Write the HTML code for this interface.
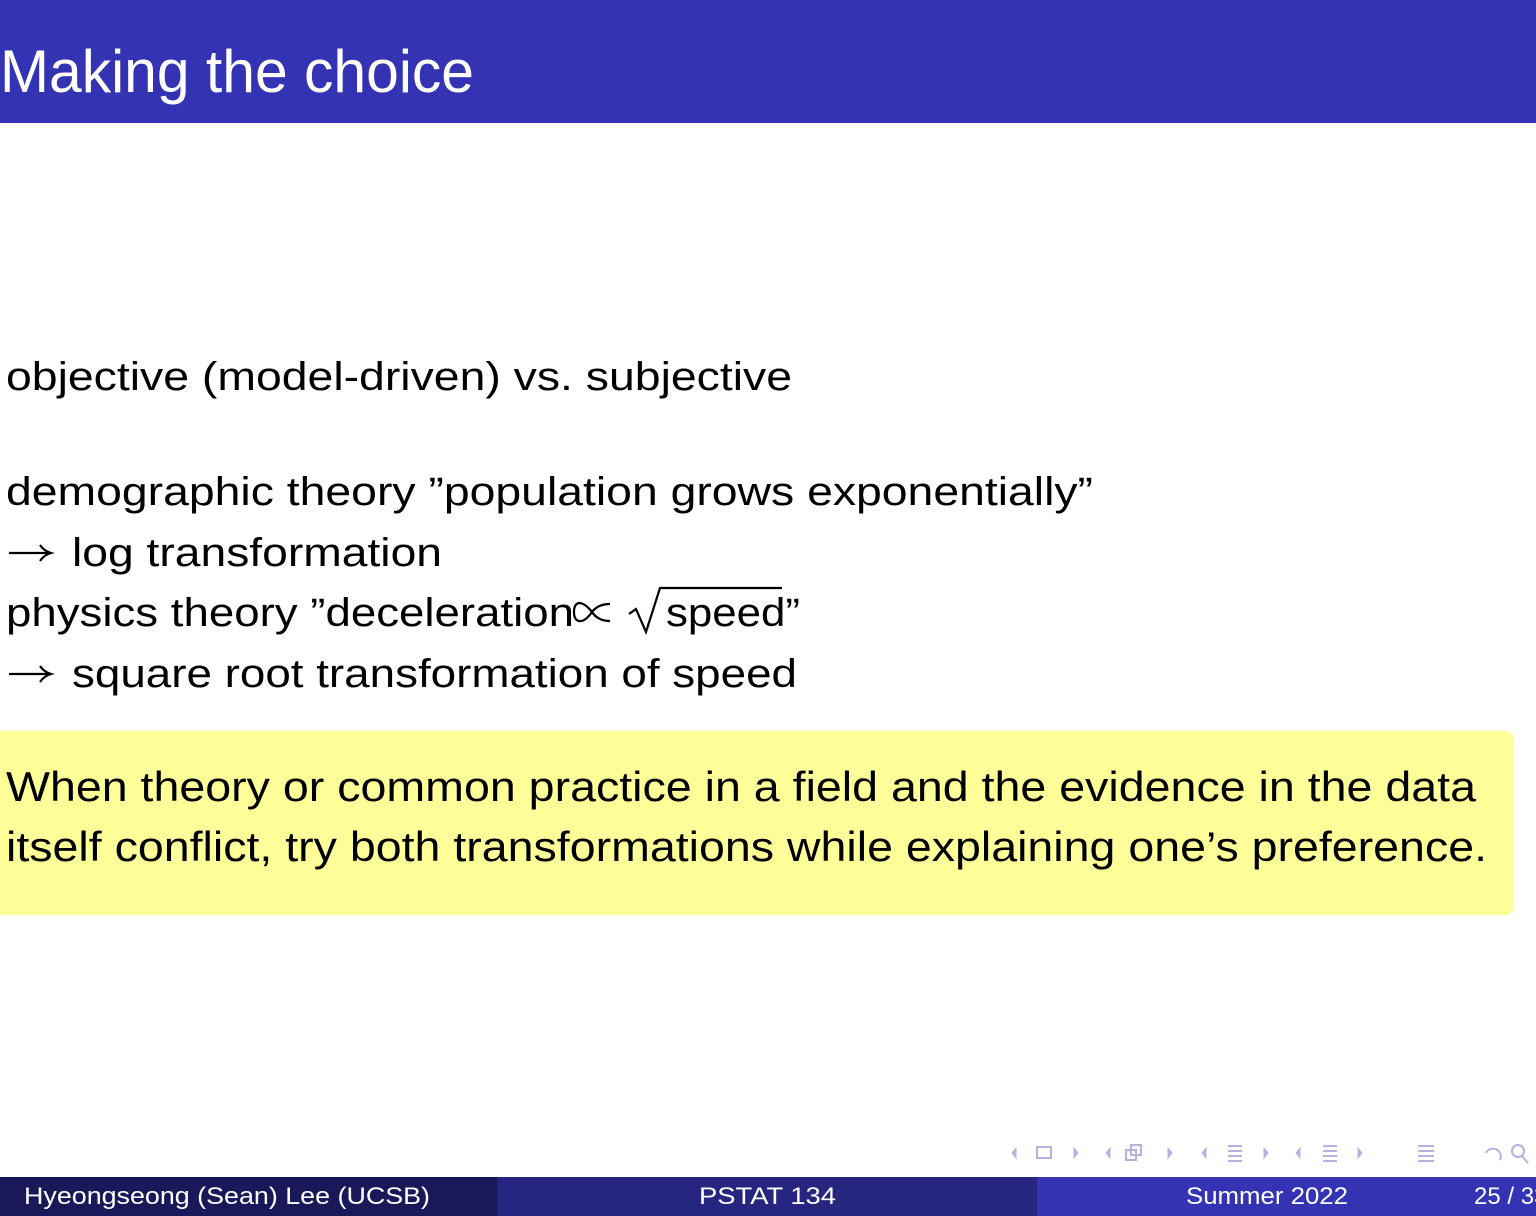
<!DOCTYPE html>
<html><head><meta charset="utf-8"><style>
html,body{margin:0;padding:0;width:1536px;height:1216px;overflow:hidden;background:#fff}
svg{display:block}
text{font-family:"Liberation Sans","DejaVu Sans",sans-serif}
</style></head><body>
<svg width="1536" height="1216" viewBox="0 0 1536 1216" xmlns="http://www.w3.org/2000/svg">
<rect x="0" y="0" width="1536" height="123" fill="#3333b3"/>
<text x="0" y="92" font-size="60" fill="#fff" textLength="474" lengthAdjust="spacingAndGlyphs">Making the choice</text>

<g font-size="40" fill="#000">
<text x="6" y="390" textLength="786" lengthAdjust="spacingAndGlyphs">objective (model-driven) vs. subjective</text>
<text x="6" y="505" textLength="1087" lengthAdjust="spacingAndGlyphs">demographic theory ”population grows exponentially”</text>
<path d="M9 553 H50 M40 545 Q44 551 51 553 Q44 555 40 561" stroke="#000" stroke-width="2.2" fill="none"/>
<text x="72" y="566" textLength="370" lengthAdjust="spacingAndGlyphs">log transformation</text>
<text x="6" y="626" textLength="568" lengthAdjust="spacingAndGlyphs">physics theory ”deceleration</text>
<path d="M610 604 Q598 604 592 612 Q585 622 579 621 Q574 620 574 612 Q574 604 579 603 Q585 603 592 612 Q598 621 610 621" stroke="#000" stroke-width="2.2" fill="none"/>
<path d="M629 614 L636 609 L646 632 L660 588 L782 588" stroke="#000" stroke-width="2.2" fill="none"/>
<text x="666" y="626" textLength="134" lengthAdjust="spacingAndGlyphs">speed”</text>
<path d="M9 674 H50 M40 666 Q44 672 51 674 Q44 676 40 682" stroke="#000" stroke-width="2.2" fill="none"/>
<text x="72" y="687" textLength="725" lengthAdjust="spacingAndGlyphs">square root transformation of speed</text>
</g>

<rect x="-10" y="731" width="1524" height="184" rx="9" fill="#ffff99"/>
<g font-size="42" fill="#000">
<text x="6" y="801" textLength="1470" lengthAdjust="spacingAndGlyphs">When theory or common practice in a field and the evidence in the data</text>
<text x="6" y="861" textLength="1481" lengthAdjust="spacingAndGlyphs">itself conflict, try both transformations while explaining one’s preference.</text>
</g>

<g fill="#b3b3e0" stroke="#b3b3e0">
<path d="M1016 1148 L1012 1153 L1016 1158Z"/>
<rect x="1037" y="1147" width="14" height="11" fill="none" stroke-width="2"/>
<path d="M1074 1148 L1078 1153 L1074 1158Z"/>
<path d="M1110 1148 L1106 1153 L1110 1158Z"/>
<rect x="1126" y="1150" width="10" height="10" fill="#fff" stroke-width="2"/>
<rect x="1131" y="1145" width="10" height="10" fill="none" stroke-width="2"/>
<path d="M1168 1148 L1172 1153 L1168 1158Z"/>
<path d="M1206 1148 L1202 1153 L1206 1158Z"/>
<path d="M1228 1146h14M1228 1151h14M1228 1156h14M1228 1161h14" stroke-width="2" fill="none"/>
<path d="M1264 1148 L1268 1153 L1264 1158Z"/>
<path d="M1300 1148 L1296 1153 L1300 1158Z"/>
<path d="M1323 1146h14M1323 1151h14M1323 1156h14M1323 1161h14" stroke-width="2" fill="none"/>
<path d="M1358 1148 L1362 1153 L1358 1158Z"/>
<path d="M1418 1146h16M1418 1151h16M1418 1156h16M1418 1161h16" stroke-width="2" fill="none"/>
<path d="M1500 1160 A7 7 0 1 0 1486 1153" stroke-width="2" fill="none"/>
<circle cx="1518" cy="1151" r="6" fill="none" stroke-width="2"/>
<path d="M1522 1156 L1528 1163" stroke-width="2"/>
</g>

<rect x="0" y="1177" width="497" height="39" fill="#191959"/>
<rect x="497" y="1177" width="540" height="39" fill="#262680"/>
<rect x="1037" y="1177" width="499" height="39" fill="#3333b3"/>
<g font-size="24" fill="#fff">
<text x="24" y="1204" textLength="406" lengthAdjust="spacingAndGlyphs">Hyeongseong (Sean) Lee  (UCSB)</text>
<text x="699" y="1204" textLength="137" lengthAdjust="spacingAndGlyphs">PSTAT 134</text>
<text x="1186" y="1204" textLength="162" lengthAdjust="spacingAndGlyphs">Summer 2022</text>
<text x="1474" y="1204">25 / 33</text>
</g>
</svg>
</body></html>
